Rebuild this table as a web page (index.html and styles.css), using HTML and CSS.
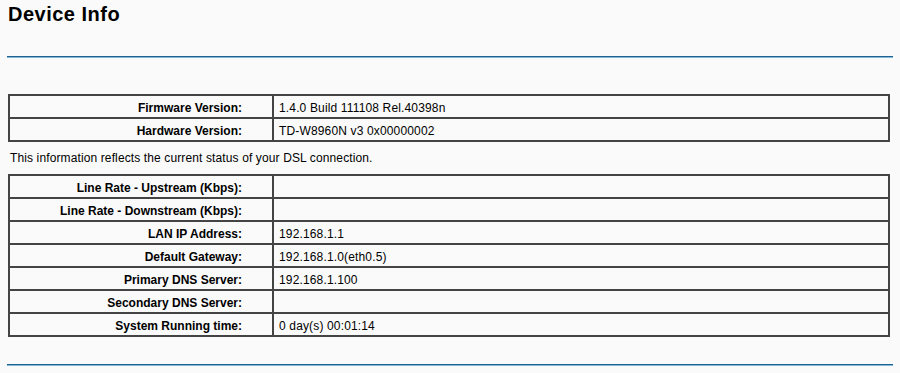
FILE: index.html
```html
<!DOCTYPE html>
<html>
<head>
<meta charset="utf-8">
<title>Device Info</title>
<link rel="stylesheet" href="styles.css">
</head>
<body>
<div class="page">
  <h1 class="title">Device Info</h1>
  <div class="rule rule-top"></div>
  <table class="info info-first">
    <tr><td class="item">Firmware Version:</td><td class="value">1.4.0 Build 111108 Rel.40398n</td></tr>
    <tr><td class="item">Hardware Version:</td><td class="value">TD-W8960N v3 0x00000002</td></tr>
  </table>
  <p class="note">This information reflects the current status of your DSL connection.</p>
  <table class="info">
    <tr><td class="item">Line Rate - Upstream (Kbps):</td><td class="value"></td></tr>
    <tr><td class="item">Line Rate - Downstream (Kbps):</td><td class="value"></td></tr>
    <tr><td class="item">LAN IP Address:</td><td class="value">192.168.1.1</td></tr>
    <tr><td class="item">Default Gateway:</td><td class="value">192.168.1.0(eth0.5)</td></tr>
    <tr><td class="item">Primary DNS Server:</td><td class="value">192.168.1.100</td></tr>
    <tr><td class="item">Secondary DNS Server:</td><td class="value"></td></tr>
    <tr><td class="item">System Running time:</td><td class="value">0 day(s) 00:01:14</td></tr>
  </table>
  <div class="rule rule-bottom"></div>
</div>
</body>
</html>
```
FILE: styles.css
```css
html, body {
  margin: 0;
  padding: 0;
  background: #fafafa;
}
body {
  font-family: "Liberation Sans", Arial, sans-serif;
  font-size: 12px;
  color: #000;
}
.page {
  padding: 0 0 0 8px;
}
.title {
  margin: 0;
  padding-top: 3px;
  font-size: 20px;
  line-height: 23px;
  font-weight: bold;
  letter-spacing: 0.5px;
  color: #000;
}
.rule {
  height: 0;
  width: 886px;
  margin-left: -1px;
  border-top: 1px solid #1d6290;
  border-bottom: 1px solid #86b8d8;
}
.rule-top {
  margin-top: 30px;
}
.rule-bottom {
  margin-top: 27px;
}
.info {
  width: 882px;
  border-collapse: separate;
  border-spacing: 0;
  border: 1px solid #444;
  table-layout: fixed;
}
.info-first {
  margin-top: 36px;
}
.info td {
  border: 1px solid #444;
  line-height: 14px;
  height: 14px;
  padding-top: 5px;
  padding-bottom: 2px;
  white-space: nowrap;
}
.info td.item {
  width: 232px;
  text-align: right;
  font-weight: bold;
  padding-right: 30px;
  padding-left: 0;
}
.info td.value {
  text-align: left;
  padding-left: 5px;
  padding-right: 0;
  letter-spacing: 0.15px;
}
.note {
  margin: 9px 0;
  padding-left: 2px;
  line-height: 14px;
  letter-spacing: 0.12px;
}
```
